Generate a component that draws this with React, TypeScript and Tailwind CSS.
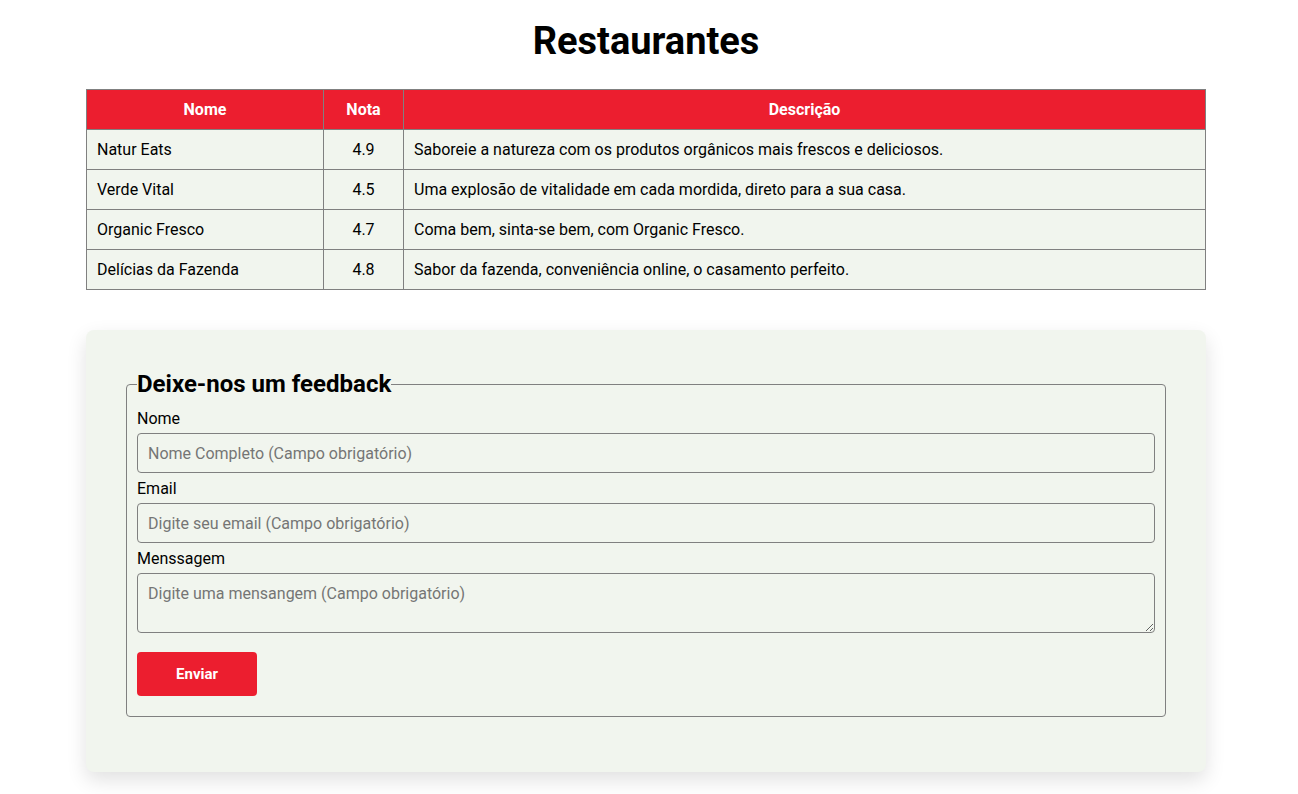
import React from "react";

const rows = [
  ["Natur Eats", "4.9", "Saboreie a natureza com os produtos orgânicos mais frescos e deliciosos."],
  ["Verde Vital", "4.5", "Uma explosão de vitalidade em cada mordida, direto para a sua casa."],
  ["Organic Fresco", "4.7", "Coma bem, sinta-se bem, com Organic Fresco."],
  ["Delícias da Fazenda", "4.8", "Sabor da fazenda, conveniência online, o casamento perfeito."],
];

export default function App() {
  return (
    <div className="min-h-[794px] bg-white text-black font-['Roboto',sans-serif]">
      <div className="w-[1292px] pb-[23px]">
        <h1 className="pt-[19px] text-center text-[38px] leading-[44px] font-bold">Restaurantes</h1>
        <table className="mx-auto mt-[26px] w-[1120px] border-collapse text-[16px]">
          <thead>
            <tr className="bg-[#EC1E2F] text-white">
              <th className="h-10 w-[237px] border border-[#808080] font-bold">Nome</th>
              <th className="h-10 w-[80px] border border-[#808080] font-bold">Nota</th>
              <th className="h-10 border border-[#808080] font-bold">Descrição</th>
            </tr>
          </thead>
          <tbody>
            {rows.map((r) => (
              <tr key={r[0]} className="bg-[#F1F5EE]">
                <td className="h-10 border border-[#808080] px-[10px]">{r[0]}</td>
                <td className="h-10 border border-[#808080] px-[10px] text-center">{r[1]}</td>
                <td className="h-10 border border-[#808080] px-[10px]">{r[2]}</td>
              </tr>
            ))}
          </tbody>
        </table>

        <div className="mx-auto mt-[40px] w-[1120px] rounded-lg bg-[#F1F5EE] px-10 pt-10 pb-[55px] shadow-[0_8px_20px_rgba(0,0,0,0.12)]">
          <fieldset className="rounded border border-[#808080] px-[10px] pb-5">
            <legend className="text-[24px] leading-[28px] font-bold">Deixe-nos um feedback</legend>
            <div className="flex flex-col gap-[5px] pt-[10px] text-[16px]">
              <label className="pt-[1px] leading-[19px]">Nome</label>
              <input
                type="text"
                placeholder="Nome Completo (Campo obrigatório)"
                className="h-10 w-full rounded border border-[#808080] bg-transparent px-[10px] text-[16px] placeholder:text-[#757575] outline-none"
              />
              <label className="pt-[1px] leading-[19px]">Email</label>
              <input
                type="email"
                placeholder="Digite seu email (Campo obrigatório)"
                className="h-10 w-full rounded border border-[#808080] bg-transparent px-[10px] text-[16px] placeholder:text-[#757575] outline-none"
              />
              <label className="pt-[1px] leading-[19px]">Menssagem</label>
              <textarea
                placeholder="Digite uma mensangem (Campo obrigatório)"
                className="block h-[60px] w-full rounded border border-[#808080] bg-transparent px-[10px] py-[10px] text-[16px] leading-[19px] placeholder:text-[#757575] outline-none"
              />
              <button className="mt-[14px] h-[44px] w-[120px] rounded bg-[#EC1E2F] text-[15px] font-bold text-white">
                Enviar
              </button>
            </div>
          </fieldset>
        </div>
      </div>
    </div>
  );
}
